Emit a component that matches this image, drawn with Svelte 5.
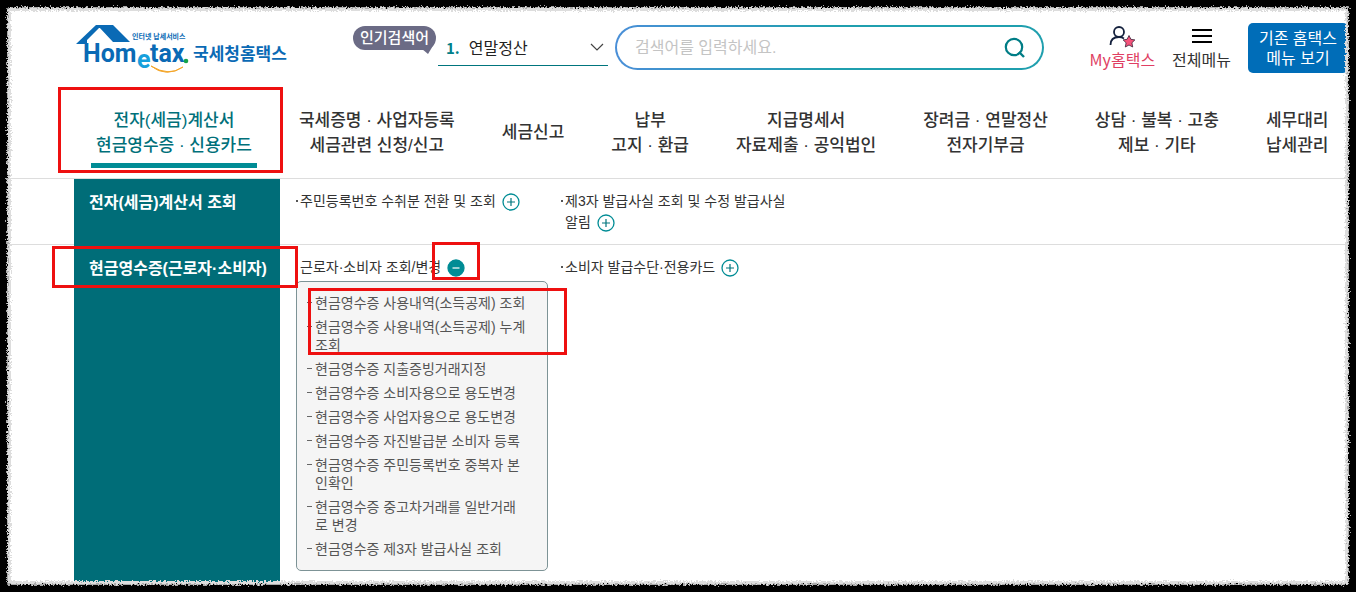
<script lang="ts">
  type Menu = { lines: string[]; active?: boolean }

  const menus: Menu[] = [
    { lines: ['전자(세금)계산서', '현금영수증 · 신용카드'], active: true },
    { lines: ['국세증명 · 사업자등록', '세금관련 신청/신고'] },
    { lines: ['세금신고'] },
    { lines: ['납부', '고지 · 환급'] },
    { lines: ['지급명세서', '자료제출 · 공익법인'] },
    { lines: ['장려금 · 연말정산', '전자기부금'] },
    { lines: ['상담 · 불복 · 고충', '제보 · 기타'] },
    { lines: ['세무대리', '납세관리'] },
  ]

  const receiptMenu = [
    { text: '현금영수증 지출증빙거래지정' },
    { text: '현금영수증 소비자용으로 용도변경' },
    { text: '현금영수증 사업자용으로 용도변경' },
    { text: '현금영수증 자진발급분 소비자 등록' },
    { text: '현금영수증 주민등록번호 중복자 본\n인확인' },
    { text: '현금영수증 중고차거래를 일반거래\n로 변경' },
    { text: '현금영수증 제3자 발급사실 조회' },
  ]
  const markedMenu = [
    { text: '현금영수증 사용내역(소득공제) 조회' },
    { text: '현금영수증 사용내역(소득공제) 누계\n조회' },
  ]

  let open = $state(true)
  let keyword = $state('')
</script>

{#snippet toggle(opened: boolean)}
  <svg width="18" height="18" viewBox="0 0 18 18" aria-hidden="true">
    <circle cx="9" cy="9" r="8" fill={opened ? '#008c95' : '#fff'} stroke="#008c95" stroke-width="1.3" />
    <path d={opened ? 'M5.5 9h7' : 'M5 9h8M9 5v8'} stroke={opened ? '#fff' : '#00757d'} stroke-width="1.2" />
  </svg>
{/snippet}

<div class="page">
  <header>
    <a class="logo" href="#home" aria-label="Hometax 국세청홈택스">
      <svg width="212" height="52" viewBox="0 0 212 52">
        <path d="M0 21 20 2h15v3H23L11 17v4z" fill="#0a6ab5" />
        <path d="M20 2h17l17 17H37L23 4z" fill="#0a6ab5" />
        <text class="tag" x="56" y="16">인터넷 납세서비스</text>
        <text class="word" x="7" y="39">Hom</text>
        <text class="word e" x="61" y="45">e</text>
        <text class="word" x="74" y="39">tax</text>
        <circle cx="110" cy="38" r="2.3" fill="#16a34a" />
        <path d="M75 43q15 12 32 1q-14 10-32-1z" fill="#f4a62a" stroke="#f4a62a" />
        <text class="name" x="117" y="37">국세청홈택스</text>
      </svg>
    </a>

    <div class="popular">
      <span class="bubble">인기검색어</span>
      <label class="rank">
        <b>1.</b>
        <select aria-label="인기검색어">
          <option>연말정산</option>
        </select>
        <svg width="14" height="8" viewBox="0 0 14 8" aria-hidden="true">
          <path d="m1 1 6 6 6-6" fill="none" stroke="#444" stroke-width="1.2" />
        </svg>
      </label>
    </div>

    <form class="search">
      <input type="text" aria-label="검색어" placeholder="검색어를 입력하세요." bind:value={keyword} />
      <button type="button" aria-label="검색">
        <svg width="22" height="22" viewBox="0 0 22 22">
          <circle cx="10" cy="10" r="8.2" fill="none" stroke="#007d86" stroke-width="2.2" />
          <path d="m15 15 5 5" stroke="#007d86" stroke-width="2.4" />
        </svg>
      </button>
    </form>

    <a class="util my" href="#my">
      <svg width="26" height="22" viewBox="0 0 26 22">
        <circle cx="10" cy="6" r="5" fill="none" stroke="#14213d" stroke-width="1.8" />
        <path d="M1.5 19c0-5 3-8 8.500-8 2 0 3.500.5 5 1.500" fill="none" stroke="#14213d" stroke-width="1.8" />
        <path d="m20 9.500 1.900 3.800 4 .6-3 2.900.8 4.200-3.700-2-3.700 2 .8-4.200-3-2.900 4-.6z" fill="#f5527a" stroke="#3a2338" stroke-width=".8" />
      </svg>
      <span>My홈택스</span>
    </a>
    <a class="util" href="#all">
      <svg width="20" height="22" viewBox="0 0 20 22">
        <path d="M0 4h20M0 10h20M0 16h20" stroke="#000" stroke-width="2" />
      </svg>
      <span>전체메뉴</span>
    </a>
    <button class="old" type="button">기존 홈택스<br />메뉴 보기</button>
  </header>

  <nav>
    {#each menus as menu}
      <a href="#menu" class:active={menu.active}>
        {#each menu.lines as line}<span>{line}</span>{/each}
        {#if menu.active}<i class="mark mark-nav"></i>{/if}
      </a>
    {/each}
  </nav>

  <main>
    <section>
      <h2>전자(세금)계산서 조회</h2>
      <ul class="links">
        <li><a href="#a">주민등록번호 수취분 전환 및 조회</a><button type="button" aria-label="펼치기">{@render toggle(false)}</button></li>
        <li><a href="#b">제3자 발급사실 조회 및 수정 발급사실<br />알림</a><button type="button" aria-label="펼치기">{@render toggle(false)}</button></li>
      </ul>
    </section>
    <section class="grow">
      <h2>현금영수증(근로자·소비자)<i class="mark mark-title"></i></h2>
      <ul class="links">
        <li>
          <a href="#c">근로자·소비자 조회/변경</a><button type="button" aria-label="접기" onclick={() => (open = !open)}>{@render toggle(open)}<i class="mark mark-toggle"></i></button>
          {#if open}
            <div class="dropdown">
              <ul class="marked">
                {#each markedMenu as item}<li><a href="#sub">{item.text}</a></li>{/each}
                <i class="mark mark-sub"></i>
              </ul>
              <ul>
                {#each receiptMenu as item}<li><a href="#sub">{item.text}</a></li>{/each}
              </ul>
            </div>
          {/if}
        </li>
        <li><a href="#d">소비자 발급수단·전용카드</a><button type="button" aria-label="펼치기">{@render toggle(false)}</button></li>
      </ul>
    </section>
  </main>

  <!-- torn paper edge -->
  <svg class="edge" aria-hidden="true">
    <filter id="torn" x="0" y="0" width="100%" height="100%">
      <feTurbulence type="fractalNoise" baseFrequency="0.6" numOctaves="2" seed="4" />
      <feDisplacementMap in="SourceGraphic" scale="6" xChannelSelector="R" yChannelSelector="G" />
    </filter>
    <g filter="url(#torn)" fill="none">
      <rect class="soft" width="100%" height="100%" rx="12" />
      <rect class="mid" width="100%" height="100%" rx="10" />
      <rect class="dark" width="100%" height="100%" rx="8" />
    </g>
  </svg>
</div>

<style>
  :global(body) { background: #000; }
  .page {
    position: relative;
    display: flex;
    flex-direction: column;
    min-height: 100vh;
    box-sizing: border-box;
    overflow: hidden;
    background: #fff;
    color: #333;
    font-family: "Liberation Sans", "Noto Sans CJK KR", sans-serif;
  }
  a { color: inherit; text-decoration: none; }
  ul { list-style: none; margin: 0; padding: 0; }
  button { font: inherit; border: 0; padding: 0; background: none; cursor: pointer; }
  svg { display: block; }

  header {
    display: flex;
    align-items: flex-start;
    padding: 23px 8px 0 76px;
    height: 72px;
  }
  .logo { margin-right: 65px; }
  .logo text { font-weight: 700; fill: #0a6ab5; }
  .logo .tag { font-size: 7px; }
  .logo .word { font-family: Roboto, "Liberation Sans", sans-serif; font-size: 25px; }
  .logo .e { fill: #16a0dc; }
  .logo .name { font-size: 17px; }

  .popular { display: flex; gap: 2px; margin-right: 7px; }
  .bubble {
    position: relative;
    height: 24px;
    line-height: 24px;
    margin-top: 3px;
    padding: 0 7px;
    border-radius: 12px;
    background: #6b6b85;
    color: #fff;
    font-size: 15px;
    font-weight: 500;
  }
  .bubble::after {
    content: "";
    position: absolute;
    right: 2px;
    bottom: -4px;
    width: 12px;
    height: 10px;
    background: #6b6b85;
    clip-path: polygon(0 50%, 100% 0, 50% 100%);
  }
  .rank {
    display: flex;
    align-items: center;
    width: 170px;
    height: 43px;
    box-sizing: border-box;
    padding: 6px 4px 0 8px;
    border-bottom: 1px solid #00757d;
    font-family: "Noto Sans CJK KR", sans-serif;
  }
  .rank b { color: #00808a; font-size: 15px; font-weight: 700; }
  .rank select {
    flex: 1;
    appearance: none;
    border: 0;
    padding: 0 0 0 9px;
    background: none;
    color: #222;
    font: inherit;
    font-size: 16px;
  }

  .search {
    flex: 1;
    display: flex;
    align-items: center;
    height: 45px;
    box-sizing: border-box;
    margin: 2px 46px 0 0;
    padding: 0 16px 0 18px;
    border: 2px solid transparent;
    border-radius: 23px;
    background: linear-gradient(#fff, #fff) padding-box, linear-gradient(90deg, #4a8fd8, #1f9fae 50%, #1f9fae) border-box;
  }
  .search input {
    flex: 1;
    min-width: 0;
    border: 0;
    padding: 0;
    outline: 0;
    background: none;
    font: inherit;
    font-size: 16px;
  }
  .search input::placeholder { color: #c4c4c4; }

  .util {
    display: flex;
    flex-direction: column;
    align-items: center;
    margin: 3px 17px 0 0;
    font-family: "Noto Sans CJK KR", sans-serif;
    font-size: 16px;
    line-height: 22px;
    white-space: nowrap;
  }
  .my { color: #e03f63; }
  .old {
    width: 100px;
    height: 50px;
    padding-top: 2px;
    border-radius: 5px;
    background: #006db8;
    color: #fff;
    font-size: 16px;
    line-height: 20px;
    white-space: nowrap;
  }

  nav {
    display: flex;
    align-items: center;
    gap: 47px;
    height: 84px;
    box-sizing: border-box;
    padding: 0 29px 8px 96px;
    border-bottom: 1px solid #ddd;
    font-size: 17px;
    font-weight: 500;
    line-height: 25px;
    white-space: nowrap;
  }
  nav a {
    position: relative;
    display: flex;
    flex-direction: column;
    align-items: center;
  }
  nav .active { color: #00707a; }
  nav .active::after {
    content: "";
    position: absolute;
    left: -5px;
    right: -5px;
    bottom: -10px;
    height: 5px;
    background: #008c95;
  }

  main { flex: 1; display: flex; flex-direction: column; }
  section { display: flex; min-height: 65px; border-bottom: 1px solid #ddd; }
  .grow { flex: 1; border: 0; }
  h2 {
    position: relative;
    width: 206px;
    box-sizing: border-box;
    margin: 0 16px -1px 74px;
    padding: 12px 0 0 15px;
    background: #006d78;
    color: #fff;
    font-size: 16px;
    font-weight: 700;
    line-height: 24px;
    white-space: nowrap;
  }
  .links { display: flex; gap: 13px; padding-top: 12px; }
  .links > li {
    position: relative;
    width: 252px;
    padding-left: 4px;
    box-sizing: border-box;
    font-size: 14px;
    line-height: 21px;
    white-space: nowrap;
  }
  .links > li::before {
    content: "";
    position: absolute;
    left: 0;
    top: 9px;
    width: 2px;
    height: 2px;
    background: #555;
  }
  .links button { position: relative; margin-left: 6px; vertical-align: middle; }

  .dropdown {
    position: absolute;
    left: 0;
    top: 24px;
    width: 252px;
    box-sizing: border-box;
    padding: 12px 10px;
    border: 1px solid #7d9396;
    border-radius: 5px;
    background: #f5f5f5;
    color: #555;
    font-size: 14px;
    line-height: 18px;
  }
  .dropdown ul { position: relative; display: grid; gap: 6px; }
  .dropdown .marked { margin-bottom: 6px; }
  .dropdown li { position: relative; padding-left: 8px; white-space: pre-line; }
  .dropdown li::before {
    content: "";
    position: absolute;
    left: 0;
    top: 8px;
    width: 5px;
    height: 1px;
    background: #666;
  }

  .mark {
    position: absolute;
    z-index: 2;
    box-sizing: border-box;
    border: 3px solid #ee1010;
    pointer-events: none;
  }
  .mark-nav { inset: -21px -31px -15px -38px; }
  .mark-title { left: -22px; right: -18px; top: 1px; height: 42px; }
  .mark-toggle { left: -15px; right: -15px; top: -17px; height: 38px; }
  .mark-sub { inset: -6px -30px -1px 1px; }

  .edge {
    position: absolute;
    inset: 0;
    z-index: 3;
    width: 100%;
    height: 100%;
    pointer-events: none;
  }
  .soft { stroke: #ddd; stroke-width: 22px; }
  .mid { stroke: #aaa; stroke-width: 16px; }
  .dark { stroke: #000; stroke-width: 14px; }
</style>
